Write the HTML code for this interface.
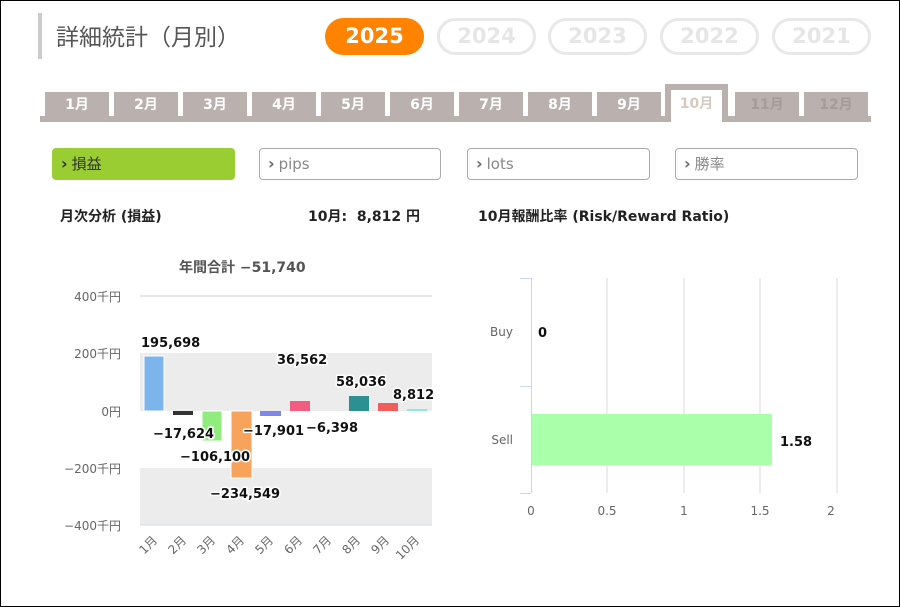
<!DOCTYPE html>
<html><head><meta charset="utf-8"><style>
*{margin:0;padding:0;box-sizing:border-box}
body{width:900px;height:607px;background:#fff;font-family:"DejaVu Sans","Noto Sans CJK JP",sans-serif;position:relative;overflow:hidden}
.frame{position:absolute;left:0;top:0;width:900px;height:607px;border:1px solid #000}
.abs{position:absolute}
.title{left:38px;top:13px;height:46px;border-left:4px solid #ccc;padding-left:14px;font-size:23px;color:#555;line-height:44px;font-family:"Noto Sans CJK JP",sans-serif}
.pill{top:18px;height:37px;width:99px;border-radius:19px;font-size:21px;font-weight:bold;text-align:center;line-height:37px}
.pill.off{border:3px solid #e8e8e8;color:#e6e6e6;line-height:31px}
.tab{top:92px;width:64px;height:26px;background:#bab0ae;color:#fff;font-weight:bold;font-size:14px;text-align:center;line-height:26px}
.btn{top:148px;height:32px;border:1px solid #aaa;border-radius:4px;font-size:15px;color:#888;line-height:30px;padding-left:8px}
.btn b{color:#666;font-size:16px;margin-right:4px}
</style></head><body>
<div class="frame"></div>
<div class="abs title">詳細統計（月別）</div>
<div class="abs pill" style="left:325px;background:#ff8200;color:#fff">2025</div>
<div class="abs pill off" style="left:437px">2024</div>
<div class="abs pill off" style="left:548px">2023</div>
<div class="abs pill off" style="left:660px">2022</div>
<div class="abs pill off" style="left:772px">2021</div>

<div class="abs" style="left:40px;top:116px;width:831px;height:6px;background:#bab0ae"></div>
<div class="abs tab" style="left:45px">1月</div>
<div class="abs tab" style="left:114px">2月</div>
<div class="abs tab" style="left:183px">3月</div>
<div class="abs tab" style="left:252px">4月</div>
<div class="abs tab" style="left:321px">5月</div>
<div class="abs tab" style="left:390px">6月</div>
<div class="abs tab" style="left:459px">7月</div>
<div class="abs tab" style="left:528px">8月</div>
<div class="abs tab" style="left:597px">9月</div>
<div class="abs" style="left:665px;top:84px;width:63px;height:38px;background:#bab0ae"></div>
<div class="abs" style="left:671px;top:90px;width:51px;height:32px;background:#fff;color:#d5c9c0;font-weight:bold;font-size:14px;text-align:center;line-height:28px">10月</div>
<div class="abs tab" style="left:735px;color:#a59c9a">11月</div>
<div class="abs tab" style="left:804px;color:#a59c9a">12月</div>

<div class="abs btn" style="left:52px;width:183px;background:#9acd32;border-color:#9acd32;color:#333"><b style="color:#333">›</b>損益</div>
<div class="abs btn" style="left:259px;width:182px"><b>›</b>pips</div>
<div class="abs btn" style="left:467px;width:183px"><b>›</b>lots</div>
<div class="abs btn" style="left:675px;width:183px"><b>›</b>勝率</div>

<div class="abs" style="left:60px;top:206px;font-size:14px;font-weight:bold;color:#222">月次分析 (損益)</div>
<div class="abs" style="left:308px;top:206px;font-size:14px;font-weight:bold;color:#222">10月:&nbsp; 8,812 円</div>
<div class="abs" style="left:179px;top:257px;font-size:14px;font-weight:bold;color:#555">年間合計 −51,740</div>
<div class="abs" style="left:478px;top:206px;font-size:14px;font-weight:bold;color:#222">10月報酬比率 (Risk/Reward Ratio)</div>

<svg class="abs" style="left:0;top:0" width="900" height="607" font-family="DejaVu Sans,Noto Sans CJK JP,sans-serif">
<rect x="140" y="353" width="292" height="58" fill="#ececec"/>
<rect x="140" y="468" width="292" height="57" fill="#ececec"/>
<line x1="140" y1="296" x2="432" y2="296" stroke="#e6e6e6" stroke-width="2"/>
<line x1="140" y1="525" x2="432" y2="525" stroke="#cdd9f0"/>
<g font-size="12" fill="#666" text-anchor="end">
<text x="121" y="301">400千円</text><text x="121" y="358">200千円</text><text x="121" y="416">0円</text><text x="121" y="473">−200千円</text><text x="121" y="530">−400千円</text></g>
<rect x="144" y="356" width="20" height="55" fill="#7cb5ec" stroke="#fff"/>
<rect x="173" y="411" width="20" height="4" fill="#333"/>
<rect x="202" y="411" width="20" height="30" fill="#90ed7d" stroke="#fff"/>
<rect x="231" y="411" width="21" height="67" fill="#f7a35c" stroke="#fff"/>
<rect x="260" y="411" width="21" height="5" fill="#8085e9"/>
<rect x="290" y="401" width="20" height="10" fill="#f15c80"/>
<rect x="349" y="396" width="20" height="15" fill="#2b908f"/>
<rect x="378" y="403" width="20" height="8" fill="#f45b5b"/>
<rect x="407" y="409" width="20" height="2" fill="#91e8e1"/>
<g font-size="13" font-weight="bold" fill="#111" stroke="#fff" stroke-width="3" paint-order="stroke">
<text x="141" y="347">195,698</text><text x="153" y="438">−17,624</text><text x="180" y="461">−106,100</text>
<text x="210" y="498">−234,549</text><text x="243" y="435">−17,901</text><text x="277" y="364">36,562</text>
<text x="306" y="432">−6,398</text><text x="336" y="386">58,036</text><text x="393" y="399">8,812</text></g>
<g font-size="12" fill="#666" text-anchor="end">
<text transform="translate(158,541) rotate(-45)">1月</text><text transform="translate(187,541) rotate(-45)">2月</text>
<text transform="translate(216,541) rotate(-45)">3月</text><text transform="translate(245,541) rotate(-45)">4月</text>
<text transform="translate(274,541) rotate(-45)">5月</text><text transform="translate(303,541) rotate(-45)">6月</text>
<text transform="translate(332,541) rotate(-45)">7月</text><text transform="translate(361,541) rotate(-45)">8月</text>
<text transform="translate(390,541) rotate(-45)">9月</text><text transform="translate(420,541) rotate(-45)">10月</text></g>

<g stroke="#e6e6e6" stroke-width="1.5"><line x1="607" y1="278" x2="607" y2="493"/><line x1="684" y1="278" x2="684" y2="493"/><line x1="760" y1="278" x2="760" y2="493"/><line x1="837" y1="278" x2="837" y2="493"/></g>
<rect x="531" y="414" width="241" height="51" fill="#aaffaa"/>
<g stroke="#ccd6eb"><line x1="531.5" y1="278" x2="531.5" y2="493"/><line x1="520" y1="278.5" x2="531" y2="278.5"/><line x1="520" y1="386.5" x2="531" y2="386.5"/><line x1="520" y1="493.5" x2="531" y2="493.5"/></g>
<g font-size="12" fill="#666" text-anchor="end"><text x="513" y="336">Buy</text><text x="513" y="444">Sell</text></g>
<g font-size="13" font-weight="bold" fill="#111"><text x="538" y="337">0</text><text x="780" y="446">1.58</text></g>
<g font-size="12" fill="#666" text-anchor="middle"><text x="531" y="515">0</text><text x="607" y="515">0.5</text><text x="684" y="515">1</text><text x="760" y="515">1.5</text><text x="831" y="515">2</text></g>
</svg>
</body></html>
